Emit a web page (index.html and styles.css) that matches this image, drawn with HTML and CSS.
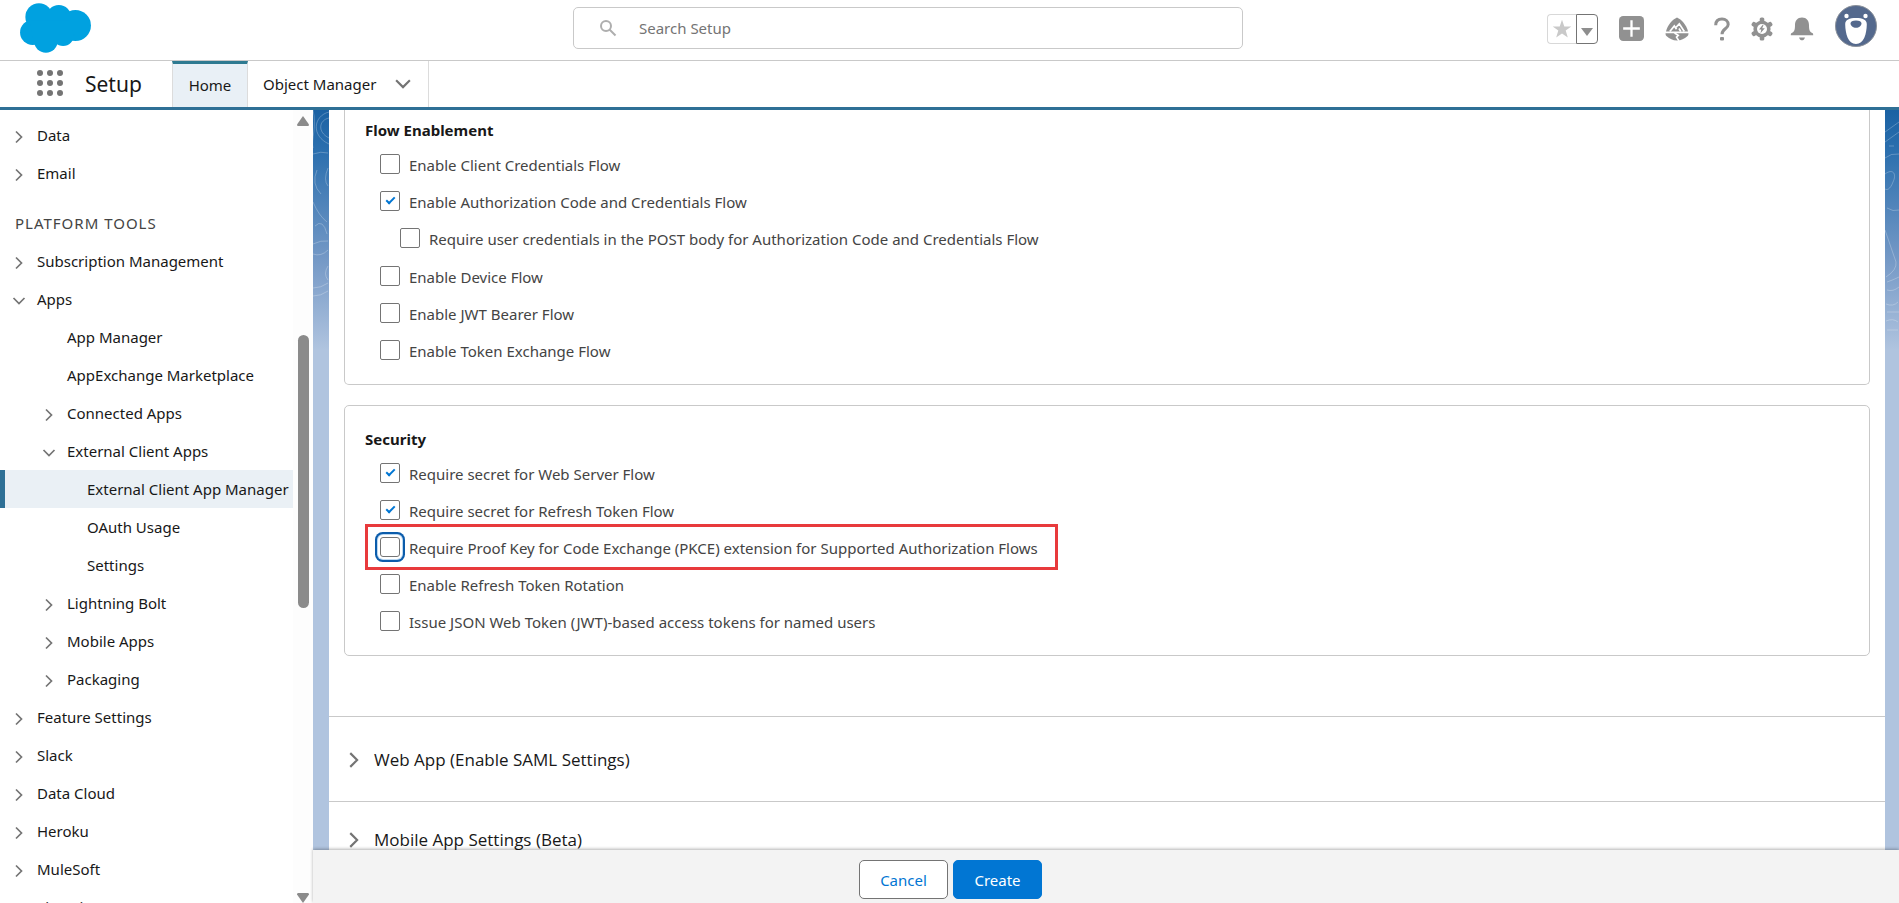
FILE: index.html
```html
<!DOCTYPE html>
<html lang="en">
<head>
<meta charset="utf-8">
<meta name="viewport" content="width=device-width, initial-scale=1">
<title>Setup</title>
<link rel="stylesheet" href="styles.css">
</head>
<body>
<svg class="defs" aria-hidden="true">
  <symbol id="right" viewBox="0 0 16 16"><path d="M5 2.500l5.500 5.500L5 13.500" fill="none" stroke="currentColor" stroke-width="1.700"/></symbol>
  <symbol id="down" viewBox="0 0 16 16"><path d="M2.500 5L8 10.500 13.500 5" fill="none" stroke="currentColor" stroke-width="1.700"/></symbol>
</svg>

<header class="topbar">
  <a class="logo" href="#" aria-label="Salesforce">
    <svg viewBox="60 8 214 151" width="71" height="50" fill="#00a1e0"><circle cx="117" cy="50" r="41"/><circle cx="177" cy="52" r="38"/><circle cx="227" cy="76" r="47"/><circle cx="98" cy="97" r="38"/><circle cx="138" cy="122" r="36"/><circle cx="190" cy="105" r="33"/><path d="M90 60h120v60H100z"/></svg>
  </a>
  <label class="search">
    <svg viewBox="0 0 18 18" width="18" height="18" fill="none" stroke="#aeaeae" stroke-width="2"><circle cx="7" cy="7" r="5"/><path d="M10.500 10.500l6 6"/></svg>
    <input type="search" placeholder="Search Setup" aria-label="Search Setup">
  </label>
  <div class="tools">
    <div class="favorites">
      <button class="fav-star" aria-label="Favorites"><svg viewBox="0 0 20 20" width="20" height="20"><path fill="#c9c9c9" d="M10 .8l2.300 6.600h7l-5.600 4.200 2.100 6.900L10 14.400l-5.800 4.100 2.100-6.900L.7 7.400h7z"/></svg></button>
      <button class="fav-list" aria-label="Favorites list"><svg viewBox="0 0 12 8" width="12" height="8"><path fill="#8e8e8e" d="M0 0h12L6 8z"/></svg></button>
    </div>
    <button class="tool" aria-label="Quick create"><svg viewBox="0 0 24 24" width="25" height="25"><rect width="24" height="24" rx="4" fill="#919191"/><path d="M12 4v16M4 12h16" stroke="#fff" stroke-width="2.200"/></svg></button>
    <button class="tool" aria-label="Guidance center"><svg viewBox="0 0 24 24" width="24" height="24"><path fill="#919191" d="M12 .5c4.500 2 9.500 7.500 11 14H1c1.500-6.500 6.500-12 11-14z"/><path d="M4.800 14.500L9.300 9l2.200 3.200M10.300 11L14.300 6.800l5 7.700M14 11.500l1.800 3" fill="none" stroke="#fff" stroke-width="1.700"/><path fill="#919191" d="M.5 16.200h23c0 1.500-.5 2.500-1.200 3-3 2.400-6 4.300-10.300 4.300S4.700 21.600 1.700 19.200C1 18.700.5 17.700.5 16.200z"/><path d="M9.500 16l3.800 2.300-1.800 1.900 2.500 3.800" fill="none" stroke="#fff" stroke-width="1.600"/></svg></button>
    <div class="tool-group">
      <button class="tool" aria-label="Help"><svg viewBox="0 0 24 24" width="24" height="24"><path d="M5.700 8.200C5.700 4 8.200 2 12 2s6.200 2.200 6.200 5.400c0 4.400-6.200 4.500-6.200 9.800" fill="none" stroke="#919191" stroke-width="3"/><rect x="10" y="20" width="4" height="3.500" rx="1" fill="#919191"/></svg></button>
      <button class="tool" aria-label="Setup"><svg viewBox="0 0 24 24" width="24" height="24"><g fill="#919191"><circle cx="12" cy="12" r="8.600"/><rect x="9.700" y=".5" width="4.600" height="23" rx="1.600"/><rect x="9.700" y=".5" width="4.600" height="23" rx="1.600" transform="rotate(60 12 12)"/><rect x="9.700" y=".5" width="4.600" height="23" rx="1.600" transform="rotate(120 12 12)"/></g><circle cx="12" cy="12" r="5" fill="#fff"/><path fill="#919191" d="M12.800 7.800L9 12.500h2.300l-.8 3.800 4.300-5h-2.600l1.400-3.500z"/></svg></button>
      <button class="tool" aria-label="Notifications"><svg viewBox="0 0 24 24" width="24" height="24" fill="#919191"><path d="M12 .5c4.600 0 7 3.300 7 7.500 0 5 .8 7 3.200 8 .9.400 1 1.200 1 2.200H.8c0-1 .1-1.800 1-2.200C4.200 15 5 13 5 8 5 3.800 7.400.5 12 .5z"/><path d="M9 20.500h6c-.6 2-1.800 2.800-3 2.800s-2.400-.8-3-2.800z"/></svg></button>
    </div>
    <button class="tool avatar" aria-label="View profile"><svg viewBox="0 0 42 42" width="42" height="42"><circle cx="21" cy="21" r="20.500" fill="#54698d" stroke="#8a9099"/><g fill="#fff"><circle cx="11.500" cy="11" r="2.200"/><circle cx="30.500" cy="11" r="2.200"/><path d="M21 13c6.500 0 11 1.500 10.800 6.500-.2 9-2.800 19.500-10.800 19.500S10.400 28.500 10.200 19.500C10 14.500 14.500 13 21 13z"/></g><path fill="#54698d" d="M21 15.500c3.500 0 5.500 1.200 5.500 3 0 2-2.500 4.300-5.500 4.300s-5.500-2.300-5.500-4.300c0-1.800 2-3 5.500-3z"/></svg></button>
  </div>
</header>

<nav class="navbar" aria-label="Global">
  <button class="waffle" aria-label="App Launcher"><svg viewBox="0 0 26 26" width="26" height="26" fill="#747474"><circle cx="3" cy="3" r="3"/><circle cx="13" cy="3" r="3"/><circle cx="23" cy="3" r="3"/><circle cx="3" cy="13" r="3"/><circle cx="13" cy="13" r="3"/><circle cx="23" cy="13" r="3"/><circle cx="3" cy="23" r="3"/><circle cx="13" cy="23" r="3"/><circle cx="23" cy="23" r="3"/></svg></button>
  <span class="app-name">Setup</span>
  <a class="tab tab-active" href="#" aria-current="page">Home</a>
  <div class="tab"><a href="#">Object Manager</a><button class="tab-menu" aria-label="Object Manager list"><svg width="20" height="20"><use href="#down"/></svg></button></div>
</nav>

<div class="workspace">
  <aside class="sidebar">
    <nav class="tree" aria-label="Setup tree">
      <a class="node" href="#"><svg class="chev"><use href="#right"/></svg>Data</a>
      <a class="node" href="#"><svg class="chev"><use href="#right"/></svg>Email</a>
      <h2 class="tree-title">PLATFORM TOOLS</h2>
      <a class="node" href="#"><svg class="chev"><use href="#right"/></svg>Subscription Management</a>
      <a class="node" href="#"><svg class="chev"><use href="#down"/></svg>Apps</a>
      <a class="node leaf-2" href="#">App Manager</a>
      <a class="node leaf-2" href="#">AppExchange Marketplace</a>
      <a class="node level-2" href="#"><svg class="chev"><use href="#right"/></svg>Connected Apps</a>
      <a class="node level-2" href="#"><svg class="chev"><use href="#down"/></svg>External Client Apps</a>
      <a class="node leaf-3 selected" href="#" aria-current="true">External Client App Manager</a>
      <a class="node leaf-3" href="#">OAuth Usage</a>
      <a class="node leaf-3" href="#">Settings</a>
      <a class="node level-2" href="#"><svg class="chev"><use href="#right"/></svg>Lightning Bolt</a>
      <a class="node level-2" href="#"><svg class="chev"><use href="#right"/></svg>Mobile Apps</a>
      <a class="node level-2" href="#"><svg class="chev"><use href="#right"/></svg>Packaging</a>
      <a class="node" href="#"><svg class="chev"><use href="#right"/></svg>Feature Settings</a>
      <a class="node" href="#"><svg class="chev"><use href="#right"/></svg>Slack</a>
      <a class="node" href="#"><svg class="chev"><use href="#right"/></svg>Data Cloud</a>
      <a class="node" href="#"><svg class="chev"><use href="#right"/></svg>Heroku</a>
      <a class="node" href="#"><svg class="chev"><use href="#right"/></svg>MuleSoft</a>
      <a class="node" href="#"><svg class="chev"><use href="#right"/></svg>Einstein</a>
    </nav>
    <div class="scrollbar" aria-hidden="true">
      <svg viewBox="0 0 12 10" width="12" height="10"><path fill="#8b8b8b" d="M6 0l6 8.500q0 1.500-1 1.500H1q-1 0-1-1.500z"/></svg>
      <div class="track"><div class="thumb"></div></div>
      <svg viewBox="0 0 12 10" width="12" height="10"><path fill="#8b8b8b" d="M6 10l6-8.500q0-1.500-1-1.500H1q-1 0-1 1.500z"/></svg>
    </div>
  </aside>

  <main class="main">
    <div class="stage">
      <svg class="contours contours-left" width="16" height="240" aria-hidden="true"><path d="M16 2C0 6-2 26 16 34M16 8C6 10 4 22 16 28M0 0c4 16-2 30 0 38M0 44q8-3 15-1M4 60q-6 14 4 24M15 58q-5 12 0 18M0 92q6 14 14 20M2 116q8-8 12 8M0 134q8-4 15-3M0 144q8 3 15-4M15 156q-5 8 0 14M0 178q8 0 15-5M0 186q8 0 15-5"/></svg>
      <svg class="contours contours-right" width="14" height="240" aria-hidden="true"><path d="M0 22L14 12M0 32L14 22M4 36h5M0 48q6-5 14-4M0 64c8-6 12 0 8 8-3 8-6 8-8 7M2 98q6 4 12 2M0 120l11 32q1 8-10 15M2 172q6-2 12-5M2 180q6 2 12-3M1 194q7 3 12-2M2 202h12M1 211q7-3 12 1M2 220h11"/></svg>
      <div class="sheet">
        <section class="panel panel-flow" aria-labelledby="flow-title">
          <h3 class="panel-title" id="flow-title">Flow Enablement</h3>
          <div class="options">
            <label class="option"><input type="checkbox"><span>Enable Client Credentials Flow</span></label>
            <label class="option"><input type="checkbox" checked><span>Enable Authorization Code and Credentials Flow</span></label>
            <label class="option option-nested"><input type="checkbox"><span>Require user credentials in the POST body for Authorization Code and Credentials Flow</span></label>
            <label class="option"><input type="checkbox"><span>Enable Device Flow</span></label>
            <label class="option"><input type="checkbox"><span>Enable JWT Bearer Flow</span></label>
            <label class="option"><input type="checkbox"><span>Enable Token Exchange Flow</span></label>
          </div>
        </section>
        <section class="panel panel-security" aria-labelledby="security-title">
          <h3 class="panel-title" id="security-title">Security</h3>
          <div class="options">
            <label class="option"><input type="checkbox" checked><span>Require secret for Web Server Flow</span></label>
            <label class="option"><input type="checkbox" checked><span>Require secret for Refresh Token Flow</span></label>
            <label class="option option-marked"><input type="checkbox" class="focused"><span>Require Proof Key for Code Exchange (PKCE) extension for Supported Authorization Flows</span></label>
            <label class="option"><input type="checkbox"><span>Enable Refresh Token Rotation</span></label>
            <label class="option"><input type="checkbox"><span>Issue JSON Web Token (JWT)-based access tokens for named users</span></label>
          </div>
        </section>
        <div class="accordion">
          <button class="accordion-row"><svg width="20" height="20"><use href="#right"/></svg>Web App (Enable SAML Settings)</button>
          <button class="accordion-row accordion-last"><svg width="20" height="20"><use href="#right"/></svg>Mobile App Settings (Beta)</button>
        </div>
      </div>
    </div>
    <footer class="actions">
      <button class="btn">Cancel</button>
      <button class="btn btn-brand">Create</button>
    </footer>
  </main>
</div>
</body>
</html>
```

FILE: styles.css
```css
* { box-sizing: border-box; }

body {
  margin: 0;
  height: 100vh;
  display: flex;
  flex-direction: column;
  overflow: hidden;
  background: #fff;
  color: #181818;
  font: 15px/24px "Noto Sans", "Open Sans", sans-serif;
}

a { color: inherit; text-decoration: none; }
button { font: inherit; color: inherit; background: none; border: 0; padding: 0; cursor: pointer; }
svg { display: block; flex: none; }
.defs { position: absolute; width: 0; height: 0; }

/* Top bar */
.topbar {
  flex: none;
  display: grid;
  grid-template-columns: 573fr 670fr 656fr;
  height: 61px;
  border-bottom: 1px solid #c9c9c9;
}
.logo { padding: 3px 20px; }
.search {
  display: flex;
  align-items: center;
  gap: 22px;
  height: 42px;
  margin-top: 7px;
  padding: 0 25px;
  border: 1px solid #c9c9c9;
  border-radius: 5px;
}
.search input {
  flex: 1;
  min-width: 0;
  padding: 0;
  border: 0;
  outline: 0;
  background: none;
  font: inherit;
  color: #444;
}
.search input::placeholder { color: #747474; opacity: 1; }
.tools {
  display: flex;
  align-items: center;
  justify-content: flex-end;
  gap: 21px;
  height: 57px;
  padding-right: 22px;
}
.tool-group { display: flex; gap: 16px; }
.avatar { margin-bottom: 5px; }
.favorites { display: flex; width: 51px; height: 30px; }
.favorites button { display: flex; align-items: center; justify-content: center; }
.fav-star { width: 29px; border: 1px solid #d8d8d8; border-right: 0; border-radius: 4px 0 0 4px; }
.favorites .fav-list { width: 22px; border: 1px solid #747474; border-radius: 0 4px 4px 0; padding-top: 6px; }

/* Navigation bar */
.navbar {
  flex: none;
  display: flex;
  height: 49px;
  border-bottom: 3px solid #2f7096;
}
.waffle { width: 85px; padding: 9px 0 0 37px; display: flex; }
.app-name { width: 87px; font-size: 21px; line-height: 46px; }
.tab {
  display: flex;
  align-items: center;
  gap: 17px;
  padding: 0 15px;
  border-right: 1px solid #dcdcdc;
}
.tab-active { width: 76px; justify-content: center; padding: 0 0 2px; background: #e9f0f6; border-top: 3px solid #2e7a91; border-left: 1px solid #dcdcdc; }
.tab-menu { color: #747474; }

/* Sidebar */
.workspace { flex: 1; min-height: 0; display: flex; }
.sidebar { flex: none; width: 313px; display: flex; overflow: hidden; }
.tree { flex: 1; padding-top: 6px; }
.node { display: flex; align-items: center; gap: 10px; height: 38px; padding: 0 0 0 11px; white-space: nowrap; }
.chev { width: 16px; height: 16px; margin-top: 4px; color: #747474; }
.level-2 { padding-left: 41px; }
.leaf-2 { padding-left: 67px; }
.leaf-3 { padding-left: 87px; }
.selected { background: #eaf0f5; border-left: 5px solid #2f7096; padding-left: 82px; }
.tree-title {
  height: 50px;
  margin: 0;
  padding: 11px 0 0 15px;
  font-size: 15px;
  font-weight: 400;
  line-height: 40px;
  letter-spacing: 1px;
  color: #444;
}
.scrollbar { width: 20px; display: flex; flex-direction: column; align-items: center; padding-top: 6px; background: #fdfdfd; }
.track { flex: 1; width: 11px; padding-top: 209px; }
.thumb { height: 49%; min-height: 40px; border-radius: 6px; background: #8b8b8b; }

/* Main area */
.main { flex: 1; min-width: 0; display: flex; flex-direction: column; }
.stage {
  position: relative;
  flex: 1;
  min-height: 0;
  overflow: hidden;
  padding: 0 14px 0 16px;
  background: linear-gradient(#1a61a3 0, #2b6fae 40px, #7599c6 150px, #b0c4df 240px);
}
.contours { position: absolute; top: 0; fill: none; stroke: #fff; stroke-opacity: .25; }
.contours-left { left: 0; }
.contours-right { right: 0; }
.sheet { padding: 0 0 20px; background: #fff; }
.panel { margin: 0 15px; padding: 0 20px 16px; border: 1px solid #c9c9c9; border-radius: 5px; }
.panel-flow { padding-top: 8px; border-top: 0; border-radius: 0 0 5px 5px; }
.panel-security { margin-top: 20px; padding-top: 21px; }
.panel-title { margin: 0 0 3px; font-size: 15px; font-weight: 700; line-height: 24px; }
.options { padding-left: 15px; }
.option {
  position: relative;
  display: flex;
  align-items: center;
  gap: 9px;
  width: fit-content;
  height: 37px;
  color: #444;
}
.option span { padding-top: 2px; }
.option-nested { margin: 0 0 1px 20px; }
.option input {
  appearance: none;
  display: grid;
  place-items: center;
  flex: none;
  width: 20px;
  height: 20px;
  margin: 0;
  border: 1px solid #747474;
  border-radius: 2px;
  background: #fff;
}
.option input:checked::after {
  content: "";
  width: 9px;
  height: 5px;
  margin-bottom: 2px;
  border: solid #0176d3;
  border-width: 0 0 2px 2px;
  box-sizing: border-box;
  transform: rotate(-45deg);
}
.option .focused { box-shadow: 0 0 0 2px #fff, 0 0 0 3px #b9d8f2, 0 0 0 5px #0b5cab; border-radius: 3px; }
.option-marked::after {
  content: "";
  position: absolute;
  inset: -4px -20px -5px -15px;
  border: 3px solid #e83a3c;
  pointer-events: none;
}

/* Collapsed sections */
.accordion { margin-top: 60px; }
.accordion-row {
  display: flex;
  align-items: center;
  gap: 10px;
  width: 100%;
  height: 85px;
  padding: 2px 15px 0;
  border-top: 1px solid #c9c9c9;
  font-family: "Open Sans", "Noto Sans", sans-serif;
  font-size: 17px;
  text-align: left;
}
.accordion-row svg { color: #747474; }
.accordion-last { height: 74px; }

/* Action bar */
.actions {
  position: relative;
  flex: none;
  display: flex;
  justify-content: center;
  gap: 5px;
  padding: 10px 311px 4px 0;
  background: #f3f3f3;
  box-shadow: 0 -1px 3px rgba(0, 0, 0, .3);
}
.btn {
  width: 89px;
  height: 39px;
  border: 1px solid #747474;
  border-radius: 5px;
  background: #fff;
  color: #0176d3;
}
.btn-brand { border-color: #0176d3; background: #0176d3; color: #fff; }
```
